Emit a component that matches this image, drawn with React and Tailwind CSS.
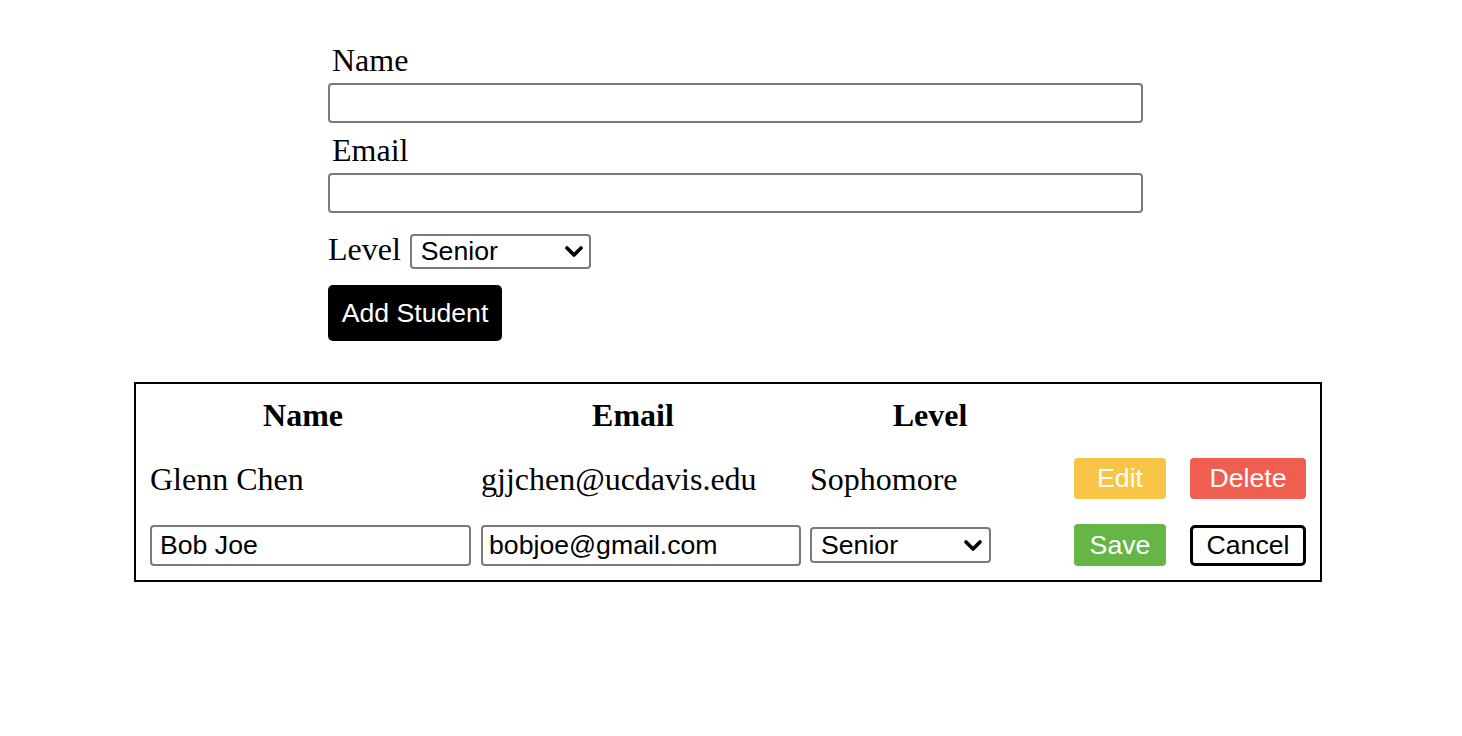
import React from "react";

const serif = { fontFamily: '"Liberation Serif", "Times New Roman", serif' };
const sans = { fontFamily: '"Liberation Sans", Arial, sans-serif' };

function Chevron({ className }) {
  return (
    <svg className={className} width="20" height="13" viewBox="0 0 20 13" fill="none">
      <path d="M3 3 L10 10 L17 3" stroke="#000" strokeWidth="3.6" strokeLinecap="round" strokeLinejoin="round" />
    </svg>
  );
}

function LevelSelect({ className, chevronClass }) {
  return (
    <div className={"relative " + className}>
      <select
        defaultValue="Senior"
        style={sans}
        className="block appearance-none w-full h-full border-2 border-[#7a7a7a] rounded-[4px] bg-white pl-[9px] text-[26.67px] leading-none text-black outline-none"
      >
        <option>Freshman</option>
        <option>Sophomore</option>
        <option>Junior</option>
        <option>Senior</option>
      </select>
      <Chevron className={"absolute pointer-events-none " + chevronClass} />
    </div>
  );
}

export default function App() {
  return (
    <div style={serif} className="w-[1462px] min-h-[736px] bg-white text-black text-[32px]">
      {/* Form */}
      <div className="pt-[42px] pl-[328px] flex flex-col items-start">
        <label className="ml-[4px] leading-[37px] h-[37px]">Name</label>
        <input
          type="text"
          style={sans}
          className="mt-[4px] w-[815px] h-[40px] border-2 border-[#7a7a7a] rounded-[4px] px-[8px] text-[26.67px] outline-none"
        />
        <label className="ml-[4px] mt-[9px] leading-[37px] h-[37px]">Email</label>
        <input
          type="email"
          style={sans}
          className="mt-[4px] w-[815px] h-[40px] border-2 border-[#7a7a7a] rounded-[4px] px-[8px] text-[26.67px] outline-none"
        />
        <div className="mt-[17px] flex items-start h-[39px]">
          <span className="leading-[37px] pt-[1px]">Level</span>
          <LevelSelect className="ml-[9px] mt-[4px] w-[181px] h-[35px]" chevronClass="right-[7px] top-[11px]" />
        </div>
        <button
          style={sans}
          className="mt-[16px] w-[174px] h-[56px] rounded-[5px] bg-black text-white text-[26.67px] leading-none text-center"
        >
          Add Student
        </button>
      </div>

      {/* Table */}
      <div className="mt-[41px] ml-[134px] w-[1188px] border-2 border-black">
        <div className="grid grid-cols-[331px_329px_264px_116px_116px] pl-[14px]">
          {/* header */}
          <div className="h-[62px] flex items-center">
            <div className="w-[306px] text-center font-bold leading-[37px]">Name</div>
          </div>
          <div className="h-[62px] flex items-center">
            <div className="w-[304px] text-center font-bold leading-[37px]">Email</div>
          </div>
          <div className="h-[62px] flex items-center">
            <div className="w-[240px] text-center font-bold leading-[37px]">Level</div>
          </div>
          <div className="h-[62px]"></div>
          <div className="h-[62px]"></div>

          {/* row 1 */}
          <div className="h-[65px] flex items-center leading-[37px] pt-[2px]">Glenn Chen</div>
          <div className="h-[65px] flex items-center leading-[37px] pt-[2px]">gjjchen@ucdavis.edu</div>
          <div className="h-[65px] flex items-center leading-[37px] pt-[2px]">Sophomore</div>
          <div className="h-[65px] flex items-center">
            <button style={sans} className="w-[92px] h-[41px] rounded-[4px] bg-[#f8c546] text-white text-[26.67px] leading-none">
              Edit
            </button>
          </div>
          <div className="h-[65px] flex items-center">
            <button style={sans} className="w-[116px] h-[41px] rounded-[4px] bg-[#ef5e4e] text-white text-[26.67px] leading-none">
              Delete
            </button>
          </div>

          {/* row 2 */}
          <div className="h-[69px] pb-[1px] flex items-center">
            <input
              type="text"
              defaultValue="Bob Joe"
              style={sans}
              className="w-[321px] h-[41px] border-2 border-[#7a7a7a] rounded-[4px] pl-[8px] text-[26.67px] text-black outline-none"
            />
          </div>
          <div className="h-[69px] pb-[1px] flex items-center">
            <input
              type="email"
              defaultValue="bobjoe@gmail.com"
              style={sans}
              className="w-[320px] h-[41px] border-2 border-[#7a7a7a] rounded-[4px] pl-[6px] text-[26.67px] text-black outline-none"
            />
          </div>
          <div className="h-[69px] pb-[1px] flex items-center">
            <LevelSelect className="w-[181px] h-[36px]" chevronClass="right-[8px] top-[12px]" />
          </div>
          <div className="h-[69px] pb-[1px] flex items-center">
            <button style={sans} className="w-[92px] h-[42px] rounded-[4px] bg-[#66b547] text-white text-[26.67px] leading-none">
              Save
            </button>
          </div>
          <div className="h-[69px] pb-[1px] flex items-center">
            <button style={sans} className="w-[116px] h-[41px] rounded-[5px] bg-white border-[3px] border-black text-black text-[26.67px] leading-none">
              Cancel
            </button>
          </div>
        </div>
      </div>
    </div>
  );
}
